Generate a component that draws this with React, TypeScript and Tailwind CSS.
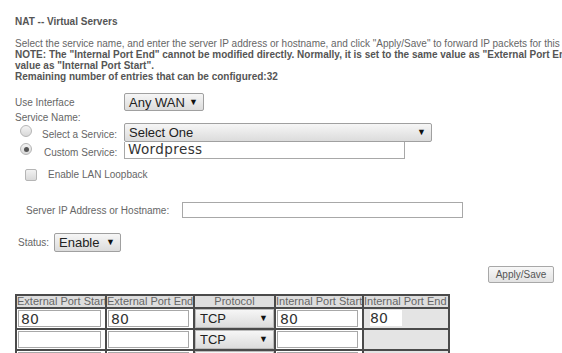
import React from "react";

const font = { fontFamily: '"Liberation Sans", Arial, sans-serif' };

function Select({ label, className }: { label: string; className: string }) {
  return (
    <div
      className={`shrink-0 whitespace-nowrap flex items-center justify-between border border-[#a0a0a0] rounded-[2px] bg-gradient-to-b from-[#f6f6f6] to-[#dcdcdc] text-[13px] text-[#222] pl-[4px] pr-[5px] leading-none ${className}`}
    >
      <span>{label}</span>
      <span className="text-[9px] text-[#111]">▼</span>
    </div>
  );
}

function Radio({ checked }: { checked?: boolean }) {
  return (
    <span className="shrink-0 w-[12px] h-[12px] rounded-full border border-[#b5b5b5] bg-gradient-to-b from-[#f4f4f4] to-[#d8d8d8] flex items-center justify-center">
      {checked && <span className="w-[5px] h-[5px] rounded-full bg-[#555]" />}
    </span>
  );
}

function Cell({ children, className = "" }: { children?: React.ReactNode; className?: string }) {
  return <td className={`border-2 border-[#4a4a4a] ${className}`}>{children}</td>;
}

function TInput({ value }: { value?: string }) {
  return (
    <div
      className="h-[17px] border border-[#a8a8a8] bg-white text-[14px] text-[#333] pl-[2px] leading-[16px]"
      style={{ fontFamily: '"DejaVu Sans", sans-serif' }}
    >
      {value}
    </div>
  );
}

export default function App() {
  return (
    <div className="w-[562px] h-[353px] overflow-hidden bg-white text-[#666]" style={font}>
      <div className="pl-[15px] pt-[15px]">
        <div className="text-[10px] leading-[13px] font-bold text-[#555] whitespace-nowrap">NAT -- Virtual Servers</div>
        <div className="mt-[10px] text-[10px] leading-[11px] whitespace-nowrap text-[#666]">
          <div>Select the service name, and enter the server IP address or hostname, and click "Apply/Save" to forward IP packets for this service to the specified server.</div>
          <div className="font-bold text-[#555]">NOTE: The "Internal Port End" cannot be modified directly. Normally, it is set to the same value as "External Port End". However, if you modify "Internal Port Start", then "Internal Port End" will be set to the same</div>
          <div className="font-bold text-[#555]">value as "Internal Port Start".</div>
          <div className="font-bold text-[#555]">Remaining number of entries that can be configured:32</div>
        </div>

        <div className="mt-[11px] flex items-center h-[18px] text-[10px] whitespace-nowrap">
          <span className="w-[109px] shrink-0">Use Interface</span>
          <Select label="Any WAN" className="w-[80px] h-[18px]" />
        </div>
        <div className="text-[10px] leading-[12px] mt-[1px] whitespace-nowrap">Service Name:</div>

        <div className="flex items-center h-[19px] mt-[-1px] whitespace-nowrap">
          <span className="ml-[5px] mt-[-3px] shrink-0">
            <Radio />
          </span>
          <span className="ml-[10px] text-[10px] mt-[3px] w-[82px] shrink-0">Select a Service:</span>
          <Select label="Select One" className="w-[308px] h-[19px]" />
        </div>
        <div className="flex items-center h-[17px] whitespace-nowrap">
          <span className="ml-[5px] mt-[-3px] shrink-0">
            <Radio checked />
          </span>
          <span className="ml-[12px] text-[10px] mt-[4px] w-[80px] shrink-0">Custom Service:</span>
          <div
            className="shrink-0 w-[281px] h-[17px] border border-[#a8a8a8] border-t-0 bg-white text-[13.5px] text-[#333] pl-[3px] leading-[15px] tracking-[0.4px]"
            style={{ fontFamily: '"DejaVu Sans", sans-serif' }}
          >
            Wordpress
          </div>
        </div>

        <div className="flex items-center mt-[9px] h-[13px] whitespace-nowrap">
          <span className="shrink-0 ml-[10px] w-[12px] h-[12px] rounded-[2px] border border-[#b5b5b5] bg-gradient-to-b from-[#f2f2f2] to-[#d9d9d9]" />
          <span className="ml-[11px] text-[10px]">Enable LAN Loopback</span>
        </div>

        <div className="flex items-center mt-[21px] h-[16px] whitespace-nowrap">
          <span className="ml-[11px] w-[156px] shrink-0 text-[10px]">Server IP Address or Hostname:</span>
          <div className="shrink-0 w-[281px] h-[16px] border border-[#a8a8a8] bg-white" />
        </div>

        <div className="flex items-center mt-[15px] h-[19px] whitespace-nowrap">
          <span className="ml-[3px] w-[36px] shrink-0 text-[10px]">Status:</span>
          <Select label="Enable" className="w-[67px] h-[19px]" />
        </div>

        <div className="flex justify-end pr-[8px] mt-[14px]">
          <button className="w-[66px] h-[17px] border border-[#a8a8a8] rounded-[2px] bg-gradient-to-b from-[#f8f8f8] to-[#e2e2e2] text-[10px] text-[#555] leading-none whitespace-nowrap">
            Apply/Save
          </button>
        </div>

        <table className="mt-[11px] border-collapse border-2 border-[#4a4a4a] text-[11px] table-fixed w-[433px]">
          <colgroup>
            <col className="w-[90px]" />
            <col className="w-[88px]" />
            <col className="w-[81px]" />
            <col className="w-[88px]" />
            <col className="w-[86px]" />
          </colgroup>
          <thead>
            <tr className="bg-[#dedede] h-[13px] leading-[11px]">
              <th className="border-2 border-[#4a4a4a] font-normal text-[#666] whitespace-nowrap overflow-hidden text-left px-0">External Port Start</th>
              <th className="border-2 border-[#4a4a4a] font-normal text-[#666] whitespace-nowrap overflow-hidden text-left px-0">External Port End</th>
              <th className="border-2 border-[#4a4a4a] font-normal text-[#666] whitespace-nowrap">Protocol</th>
              <th className="border-2 border-[#4a4a4a] font-normal text-[#666] whitespace-nowrap overflow-hidden text-left px-0">Internal Port Start</th>
              <th className="border-2 border-[#4a4a4a] font-normal text-[#666] whitespace-nowrap overflow-hidden text-left px-0">Internal Port End</th>
            </tr>
          </thead>
          <tbody>
            {["80", "", ""].map((v, i) => (
              <tr key={i} className="h-[20px]">
                <Cell className="pl-[1px] pr-[4px] py-0">
                  <TInput value={v} />
                </Cell>
                <Cell className="pl-[1px] pr-[4px] py-0">
                  <TInput value={v} />
                </Cell>
                <Cell className="p-0">
                  <Select label="TCP" className="h-[19px] rounded-none border-[#bbb]" />
                </Cell>
                <Cell className="pl-[1px] pr-[4px] py-0">
                  <TInput value={v} />
                </Cell>
                <Cell className="bg-[#e4e4e4] p-0">
                  <div
                    className="h-[17px] text-[14px] text-[#333] pl-[6px] leading-[17px] whitespace-nowrap"
                    style={{ fontFamily: '"DejaVu Sans", sans-serif' }}
                  >
                    {v && <span className="bg-white pr-[14px]">{v}</span>}
                  </div>
                </Cell>
              </tr>
            ))}
          </tbody>
        </table>
      </div>
    </div>
  );
}
